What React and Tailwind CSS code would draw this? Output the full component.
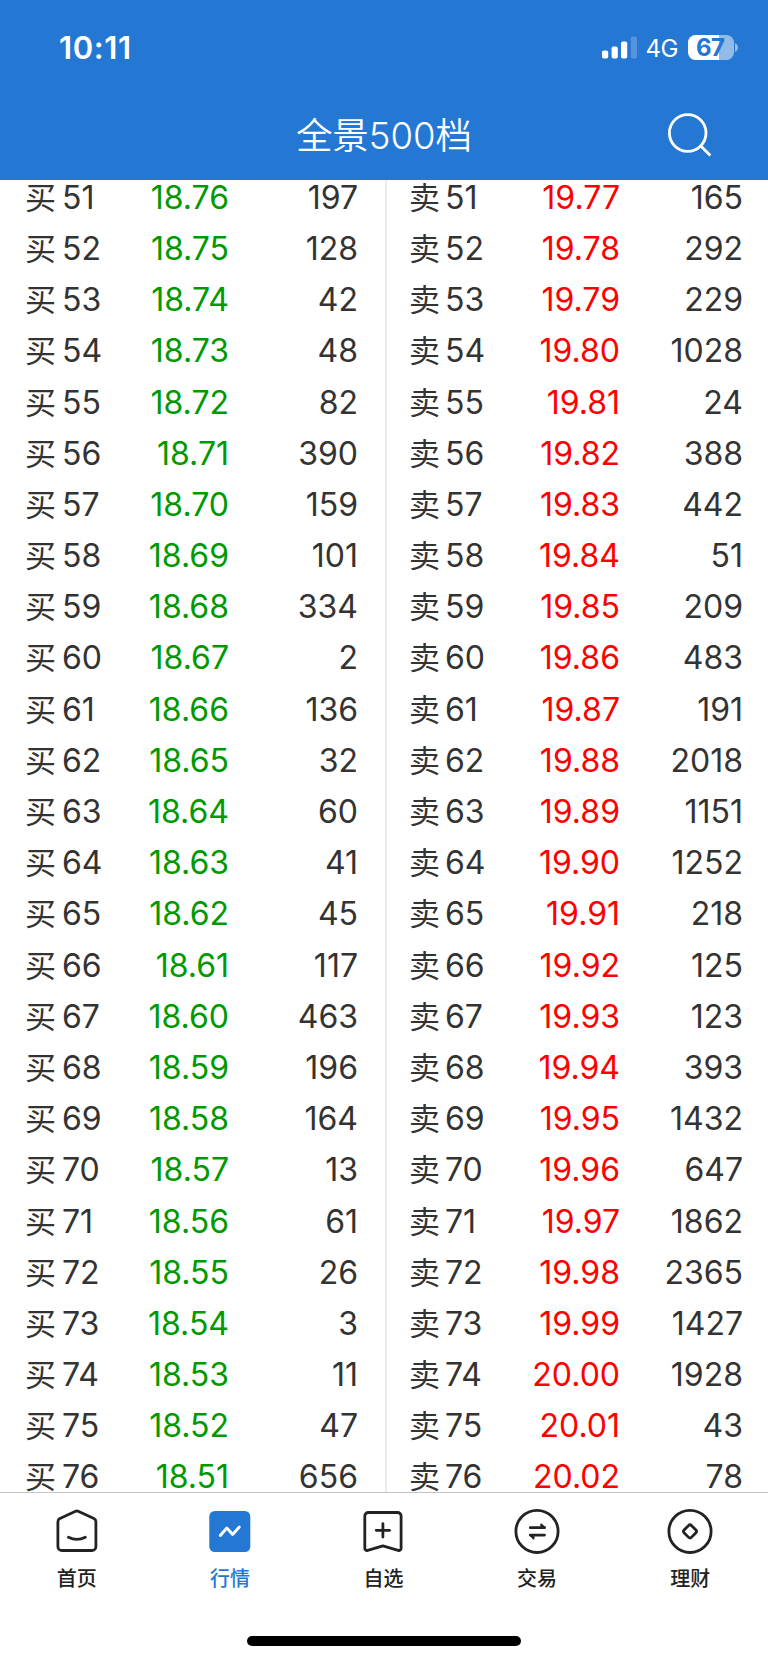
import clsx from 'clsx';

// [档位, 买价, 买量, 卖价, 卖量]
const levels = [
  [51, '18.76', 197, '19.77', 165],
  [52, '18.75', 128, '19.78', 292],
  [53, '18.74', 42, '19.79', 229],
  [54, '18.73', 48, '19.80', 1028],
  [55, '18.72', 82, '19.81', 24],
  [56, '18.71', 390, '19.82', 388],
  [57, '18.70', 159, '19.83', 442],
  [58, '18.69', 101, '19.84', 51],
  [59, '18.68', 334, '19.85', 209],
  [60, '18.67', 2, '19.86', 483],
  [61, '18.66', 136, '19.87', 191],
  [62, '18.65', 32, '19.88', 2018],
  [63, '18.64', 60, '19.89', 1151],
  [64, '18.63', 41, '19.90', 1252],
  [65, '18.62', 45, '19.91', 218],
  [66, '18.61', 117, '19.92', 125],
  [67, '18.60', 463, '19.93', 123],
  [68, '18.59', 196, '19.94', 393],
  [69, '18.58', 164, '19.95', 1432],
  [70, '18.57', 13, '19.96', 647],
  [71, '18.56', 61, '19.97', 1862],
  [72, '18.55', 26, '19.98', 2365],
  [73, '18.54', 3, '19.99', 1427],
  [74, '18.53', 11, '20.00', 1928],
  [75, '18.52', 47, '20.01', 43],
  [76, '18.51', 656, '20.02', 78],
];

function StatusBar() {
  return (
    <div className="flex h-[95px] items-center justify-between pl-[59px] pr-[30px] text-white">
      <span className="text-[31px] font-semibold leading-none tracking-[0.6px]">10:11</span>
      <div className="flex items-center">
        <svg width="36" height="24" viewBox="0 0 36 24" fill="#fff">
          <rect x="0" y="14.500" width="6.2" height="8" rx="1.8" />
          <rect x="9.6" y="10.500" width="6.2" height="12" rx="1.8" />
          <rect x="19" y="5.500" width="6.2" height="17" rx="1.8" />
          <rect x="28.8" y="0.500" width="6.2" height="22" rx="1.8" opacity="0.22" />
        </svg>
        <span className="ml-[8px] w-[34px] pt-[2px] text-[24px] leading-none tracking-[-0.5px]">4G</span>
        <div className="ml-[8.5px] flex h-[25px] w-[45.5px] items-center justify-center rounded-[7.5px] bg-linear-to-r from-white from-67% to-white/50 to-67% pr-px text-[24px] font-bold leading-[25px] tracking-[-0.5px] text-[#2577d4]">
          67
        </div>
        <svg className="ml-[1.5px]" width="3" height="9" viewBox="0 0 3 9" fill="#fff" opacity="0.5">
          <path d="M0 0C2 1 3 2.600 3 4.500S2 8 0 9Z" />
        </svg>
      </div>
    </div>
  );
}

function TitleBar() {
  return (
    <div className="grid h-[82px] grid-cols-[1fr_auto_1fr] items-center text-white">
      <span />
      <h1 className="text-[36.5px] font-[350] leading-[82px]">全景500档</h1>
      <svg className="mr-[56px] justify-self-end" width="44" height="46" viewBox="0 0 44 46" fill="none" stroke="#fff" strokeWidth="2.800">
        <circle cx="19.700" cy="20" r="18.300" />
        <path d="M32.300 32.500L42.300 42.500" />
      </svg>
    </div>
  );
}

function Level({ side, index, price, amount }) {
  const buy = side === '买';
  return (
    <div className="flex h-[28px] items-center text-[32px] leading-[28px] text-[#333]">
      <span className="text-[31px]">{side}</span>
      <span className={clsx('w-[60px]', buy ? 'ml-[6px]' : 'ml-[5px]')}>{index}</span>
      <span className={clsx('text-right', buy ? 'w-[107px] text-[#090]' : 'w-[115px] text-[#f00]')}>{price}</span>
      <span className="flex-1 text-right">{amount}</span>
    </div>
  );
}

const tabs = [
  {
    label: '首页',
    icon: (
      <path d="M21.600 3.300a3 3 0 0 1 2.600 0L39.900 10.600a3.600 3.600 0 0 1 2 3.300V38.500a4 4 0 0 1-4 4H7.900a4 4 0 0 1-4-4V13.900a3.600 3.600 0 0 1 2-3.300ZM14.500 29.300q8.400 4.200 16.800 0" />
    ),
  },
  {
    label: '行情',
    active: true,
    icon: (
      <>
        <rect x="2.300" y="3" width="41" height="41" rx="5.500" fill="#2577d4" stroke="none" />
        <path d="M13.300 27.500L19.800 20L25.700 26.500L32.300 19" stroke="#fff" strokeWidth="2.900" />
      </>
    ),
  },
  {
    label: '自选',
    icon: (
      <>
        <path d="M8.500 4.500H37.500a3.600 3.600 0 0 1 3.600 3.600V40.300a2.200 2.200 0 0 1-2.900 2.100L22.900 37.800 7.700 42.400a2.200 2.200 0 0 1-2.900-2.100V8.100a3.600 3.600 0 0 1 3.600-3.600Z" />
        <path d="M16.200 22.300h13.400M22.900 15.600v13.400" />
      </>
    ),
  },
  {
    label: '交易',
    icon: (
      <>
        <circle cx="23" cy="23.400" r="21.100" />
        <path d="M16.300 19.700H30.500M30.500 27.100H16.300" />
        <path d="M27.200 16.300l3.500 3.400h-3.500ZM19.600 30.500l-3.500-3.400h3.500Z" fill="#222" strokeWidth="1.800" />
      </>
    ),
  },
  {
    label: '理财',
    icon: (
      <>
        <circle cx="23" cy="23.400" r="21.100" />
        <rect x="17.800" y="18.200" width="10.400" height="10.400" rx="2.300" transform="rotate(45 23 23.400)" />
      </>
    ),
  },
];

function TabBar() {
  return (
    <nav className="flex h-[171px] flex-col border-t border-[#c4c4c4] bg-white">
      <div className="grid w-[767px] grid-cols-5 pt-[15px]">
        {tabs.map((tab) => (
          <div
            key={tab.label}
            className={clsx('flex flex-col items-center text-[20px] font-medium', tab.active ? 'text-[#2577d4]' : 'text-[#222]')}
          >
            <svg width="46" height="46" viewBox="0 0 46 46" fill="none" stroke="#222" strokeWidth="2.800" strokeLinecap="round" strokeLinejoin="round">
              {tab.icon}
            </svg>
            <span className="mt-[9px] leading-[32px]">{tab.label}</span>
          </div>
        ))}
      </div>
      <div className="mx-auto mb-[17px] mt-auto h-[10px] w-[274px] rounded-full bg-black" />
    </nav>
  );
}

export default function App() {
  return (
    <div className="flex h-[1663px] w-[768px] flex-col overflow-hidden bg-white font-[Inter,'Noto_Sans_CJK_SC',sans-serif]">
      <header className="h-[180px] shrink-0 bg-[#2577d4]">
        <StatusBar />
        <TitleBar />
      </header>
      <main className="flex h-[1312px] shrink-0">
        <div className="w-[387px] border-r-2 border-[#ebebeb]">
          <div className="flex flex-col gap-[23.19px] pl-[25px] pr-[27px] pt-[3.8px]">
            {levels.map(([n, price, amount]) => (
              <Level key={n} side="买" index={n} price={price} amount={amount} />
            ))}
          </div>
        </div>
        <div className="flex-1">
          <div className="flex flex-col gap-[23.19px] pl-[22px] pr-[25px] pt-[3.8px]">
            {levels.map(([n, , , price, amount]) => (
              <Level key={n} side="卖" index={n} price={price} amount={amount} />
            ))}
          </div>
        </div>
      </main>
      <TabBar />
    </div>
  );
}
